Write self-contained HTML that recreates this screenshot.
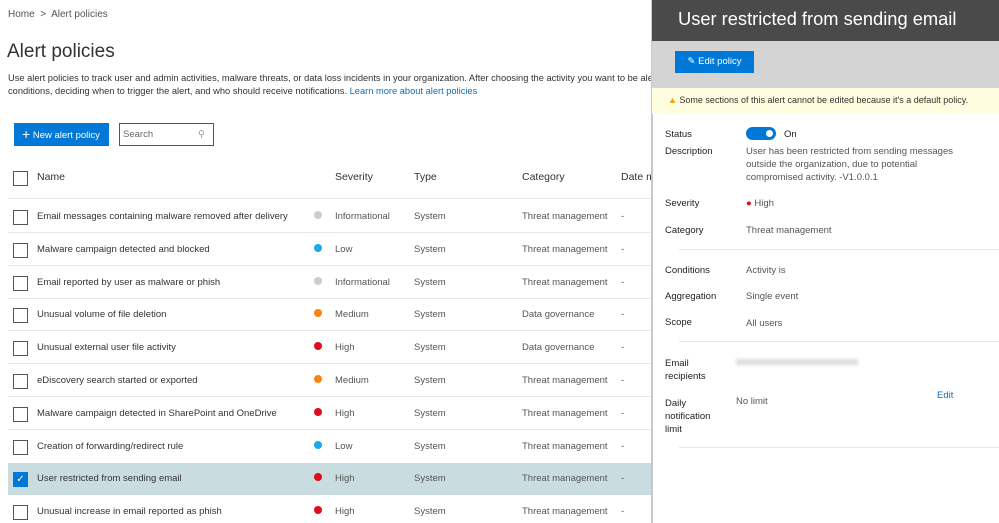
<!DOCTYPE html>
<html><head><meta charset="utf-8"><style>
*{margin:0;padding:0;box-sizing:border-box}
body{width:999px;height:523px;overflow:hidden;background:#fff;font-family:"Liberation Sans",sans-serif;color:#333;position:relative}
.a{position:absolute;white-space:nowrap}
.cb{position:absolute;left:13px;width:15px;height:15px;border:1px solid #555;background:#fff}
.dot{position:absolute;width:8px;height:8px;border-radius:50%}
.r{font-size:9.5px;color:#333}
.g{color:#555}
.hl{position:absolute;left:8px;width:645px;height:1px;background:#e8e8e8}
.pl{position:absolute;left:665px;font-size:9.5px;color:#222}
.pv{position:absolute;left:746px;font-size:9.5px;color:#555;line-height:13px}
</style></head><body>
<div class="a" style="left:8px;top:9px;font-size:10px;color:#555">Home &nbsp;&gt;&nbsp; Alert policies</div>
<div class="a" style="left:7px;top:41px;font-size:19px;color:#333">Alert policies</div>
<div class="a" style="left:8px;top:72px;font-size:9.3px;line-height:13px;color:#333">Use alert policies to track user and admin activities, malware threats, or data loss incidents in your organization. After choosing the activity you want to be alerted on, refine the policy by adding<br>conditions, deciding when to trigger the alert, and who should receive notifications. <span style="color:#0a6ebd">Learn more about alert policies</span></div>
<div class="a" style="left:14px;top:123px;width:95px;height:23px;background:#0078d7;color:#fff;font-size:9.5px;line-height:23px;padding-left:8px"><span style="font-size:14px;vertical-align:-1px">+</span> New alert policy</div>
<div class="a" style="left:119px;top:123px;width:95px;height:23px;border:1px solid #555;font-size:9.5px;color:#666;line-height:21px;padding-left:3px">Search<span style="position:absolute;right:8px;top:0;color:#999">&#9906;</span></div>
<div class="cb" style="top:171px"></div>
<div class="a" style="left:37px;top:171px;font-size:10.5px">Name</div>
<div class="a" style="left:335px;top:171px;font-size:10.5px">Severity</div>
<div class="a" style="left:414px;top:171px;font-size:10.5px">Type</div>
<div class="a" style="left:522px;top:171px;font-size:10.5px">Category</div>
<div class="a" style="left:621px;top:171px;font-size:10.5px">Date m</div>
<div class="hl" style="top:198px"></div>
<div class="a" style="left:8px;top:463px;width:645px;height:32px;background:#c9dde1"></div>
<div id="rows"></div>
<script>
var d=[["Email messages containing malware removed after delivery","#ccc","Informational","System","Threat management"],
["Malware campaign detected and blocked","#1aabe6","Low","System","Threat management"],
["Email reported by user as malware or phish","#ccc","Informational","System","Threat management"],
["Unusual volume of file deletion","#f7850f","Medium","System","Data governance"],
["Unusual external user file activity","#e00b1c","High","System","Data governance"],
["eDiscovery search started or exported","#f7850f","Medium","System","Threat management"],
["Malware campaign detected in SharePoint and OneDrive","#e00b1c","High","System","Threat management"],
["Creation of forwarding/redirect rule","#1aabe6","Low","System","Threat management"],
["User restricted from sending email","#e00b1c","High","System","Threat management"],
["Unusual increase in email reported as phish","#e00b1c","High","System","Threat management"]];
var h="";d.forEach(function(r,i){var y=216+i*32.8;
var sel=i==8;
h+='<div class="cb" style="top:'+(y-6)+'px;'+(sel?'background:#0078d7;border-color:#0078d7;color:#fff;font-size:10px;line-height:13px;text-align:center':'')+'">'+(sel?'&#10003;':'')+'</div>';
h+='<div class="a r" style="left:37px;top:'+(y-5)+'px">'+r[0]+'</div>';
h+='<div class="dot" style="left:314px;top:'+(y-5)+'px;background:'+r[1]+'"></div>';
h+='<div class="a r g" style="left:335px;top:'+(y-5)+'px">'+r[2]+'</div>';
h+='<div class="a r g" style="left:414px;top:'+(y-5)+'px">'+r[3]+'</div>';
h+='<div class="a r g" style="left:522px;top:'+(y-5)+'px">'+r[4]+'</div>';
h+='<div class="a r g" style="left:621px;top:'+(y-5)+'px">-</div>';
if(i<9&&i!=7&&i!=8)h+='<div class="hl" style="top:'+(y+16)+'px"></div>';});
document.getElementById("rows").innerHTML=h;
</script>
<div class="a" style="left:651px;top:0;width:348px;height:523px;background:#fff;border-left:2px solid #c8c8c8"></div>
<div class="a" style="left:652px;top:0;width:347px;height:41px;background:#4a4a4a"></div>
<div class="a" style="left:678px;top:8px;font-size:18.3px;color:#fff">User restricted from sending email</div>
<div class="a" style="left:652px;top:41px;width:347px;height:47px;background:#d4d4d4"></div>
<div class="a" style="left:675px;top:51px;width:79px;height:22px;background:#0078d7;color:#fff;font-size:9.5px;line-height:22px;text-align:center">&#9998; Edit policy</div>
<div class="a" style="left:652px;top:88px;width:347px;height:26px;background:#fffde0"></div>
<div class="a" style="left:668px;top:95px;font-size:9px;color:#333"><span style="color:#f0a30a">&#9650;</span> Some sections of this alert cannot be edited because it's a default policy.</div>
<div class="pl" style="top:129px">Status</div>
<div class="a" style="left:746px;top:127px;width:30px;height:13px;border-radius:7px;background:#0078d7"><div style="position:absolute;right:3px;top:3px;width:7px;height:7px;border-radius:50%;background:#fff"></div></div>
<div class="a" style="left:784px;top:129px;font-size:9.5px;color:#222">On</div>
<div class="pl" style="top:146px">Description</div>
<div class="pv" style="top:145px">User has been restricted from sending messages<br>outside the organization, due to potential<br>compromised activity. -V1.0.0.1</div>
<div class="pl" style="top:198px">Severity</div>
<div class="pv" style="top:197px"><span style="color:#e00b1c">&#9679;</span> High</div>
<div class="pl" style="top:225px">Category</div>
<div class="pv" style="top:224px">Threat management</div>
<div class="a" style="left:679px;top:249px;width:320px;height:1px;background:#e8e8e8"></div>
<div class="pl" style="top:265px">Conditions</div><div class="pv" style="top:264px">Activity is</div>
<div class="pl" style="top:291px">Aggregation</div><div class="pv" style="top:290px">Single event</div>
<div class="pl" style="top:317px">Scope</div><div class="pv" style="top:317px">All users</div>
<div class="a" style="left:679px;top:341px;width:320px;height:1px;background:#e8e8e8"></div>
<div class="pl" style="top:357px;line-height:13px">Email<br>recipients</div>
<div class="a" style="left:736px;top:359px;width:122px;height:6px;background:#ddd;filter:blur(1.5px)"></div>
<div class="pl" style="top:397px;line-height:13px">Daily<br>notification<br>limit</div>
<div class="a" style="left:736px;top:396px;font-size:9.5px;color:#555">No limit</div>
<div class="a" style="left:937px;top:390px;font-size:9.5px;color:#0a6ebd">Edit</div>
<div class="a" style="left:679px;top:447px;width:320px;height:1px;background:#e8e8e8"></div>
</body></html>
